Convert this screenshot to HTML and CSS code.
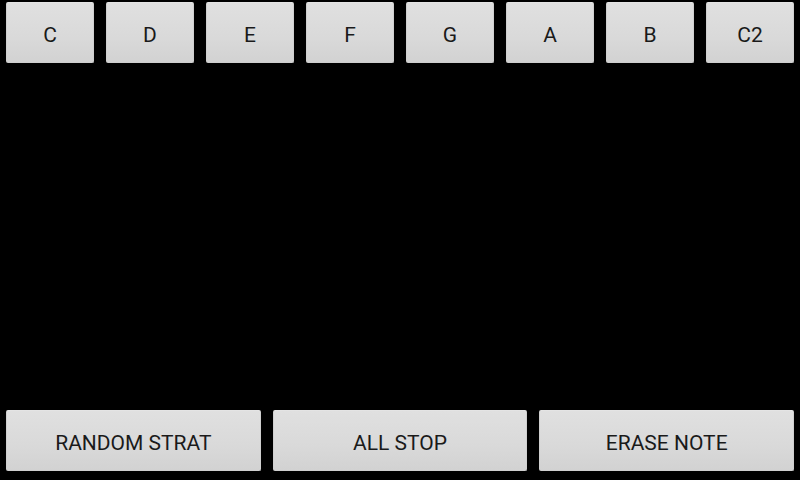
FILE: index.html
```html
<!DOCTYPE html>
<html>
<head>
<meta charset="utf-8">
<link rel="stylesheet" href="styles.css">
</head>
<body>
<div class="screen">
  <div class="notes">
    <div class="cell"><button class="btn">C</button></div>
    <div class="cell"><button class="btn">D</button></div>
    <div class="cell"><button class="btn">E</button></div>
    <div class="cell"><button class="btn">F</button></div>
    <div class="cell"><button class="btn">G</button></div>
    <div class="cell"><button class="btn">A</button></div>
    <div class="cell"><button class="btn">B</button></div>
    <div class="cell"><button class="btn">C2</button></div>
  </div>
  <div class="spacer"></div>
  <div class="actions">
    <div class="cell"><button class="btn">RANDOM STRAT</button></div>
    <div class="cell"><button class="btn">ALL STOP</button></div>
    <div class="cell"><button class="btn">ERASE NOTE</button></div>
  </div>
</div>
</body>
</html>
```
FILE: styles.css
```css
html, body {
  margin: 0;
  padding: 0;
  background: #000;
}
.screen {
  width: 800px;
  height: 480px;
  display: flex;
  flex-direction: column;
  font-family: Roboto, "Noto Sans", sans-serif;
}
.notes, .actions {
  display: flex;
}
.notes {
  padding-top: 2px;
}
.actions {
  padding-bottom: 9px;
}
.spacer {
  flex: 1;
}
.cell {
  flex: 1;
  padding: 0 6px;
  display: flex;
}
.btn {
  flex: 1;
  height: 61px;
  margin: 0;
  padding: 4px 0 0 0;
  border: 1px solid #cfcfcf;
  border-top-color: #e4e4e4;
  border-radius: 2px;
  background: linear-gradient(to bottom, #e0e0e0 0%, #d9d9d9 60%, #d2d2d2 100%);
  color: #1a1a1a;
  font-family: Roboto, "Noto Sans", sans-serif;
  font-size: 21px;
  font-weight: 400;
  text-align: center;
}
```
